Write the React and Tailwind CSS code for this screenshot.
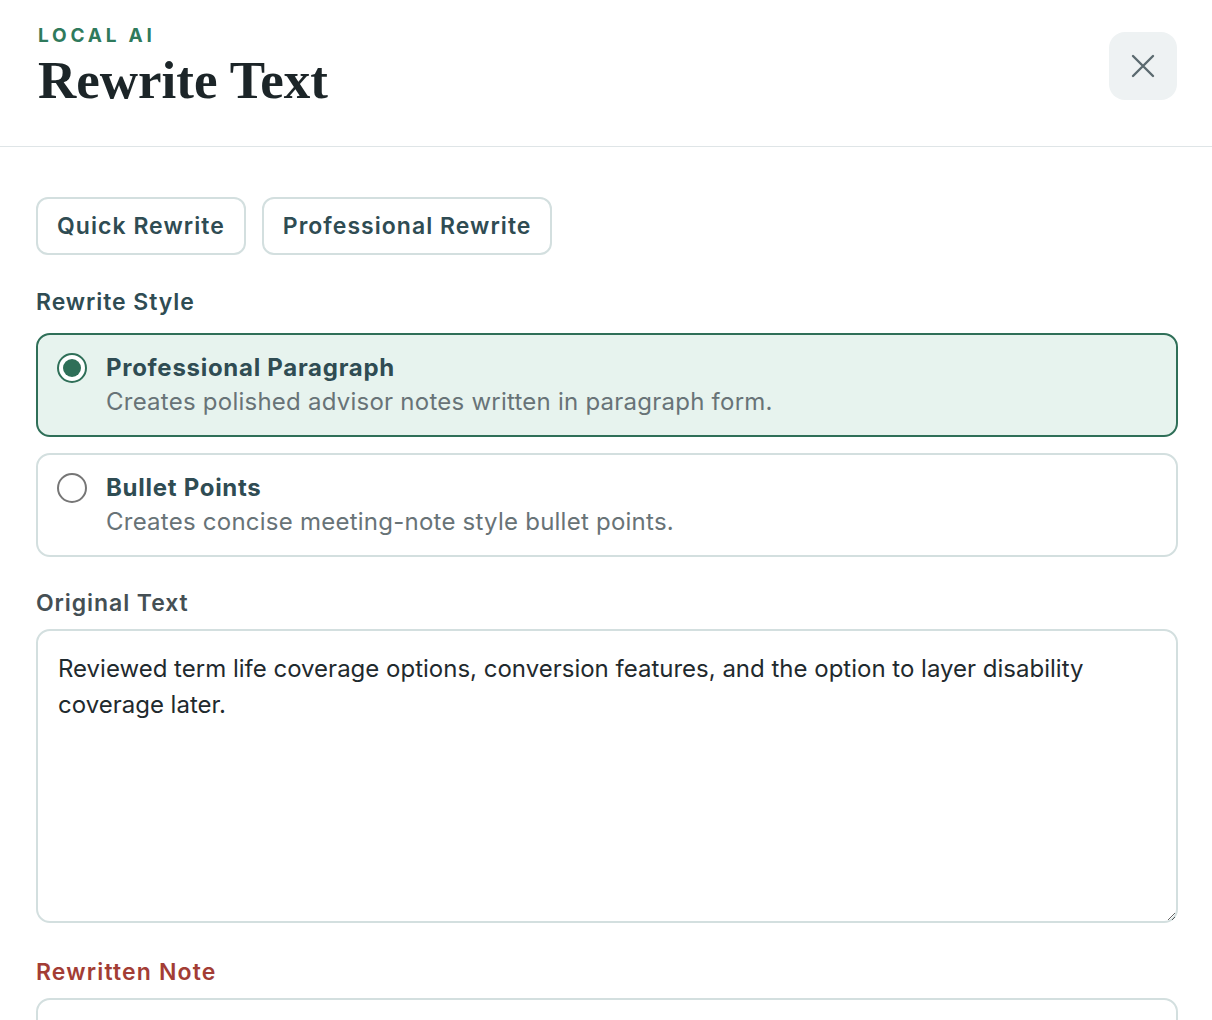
import React, { useState } from "react";

const styles = [
    {
        id: "paragraph",
        title: "Professional Paragraph",
        description: "Creates polished advisor notes written in paragraph form.",
    },
    {
        id: "bullets",
        title: "Bullet Points",
        description: "Creates concise meeting-note style bullet points.",
    },
];

function Radio({ checked }) {
    return (
        <span
            className={
                "mt-[2px] flex h-[30px] w-[30px] shrink-0 items-center justify-center rounded-full border-2 bg-white " +
                (checked ? "border-[#2f6f58]" : "border-[#767676]")
            }
        >
            {checked && <span className="h-[18px] w-[18px] rounded-full bg-[#2f6f58]" />}
        </span>
    );
}

export default function App() {
    const [style, setStyle] = useState("paragraph");
    const [text, setText] = useState(
        "Reviewed term life coverage options, conversion features, and the option to layer disability coverage later."
    );

    return (
        <div className="min-h-screen bg-white font-['Inter','Liberation_Sans',sans-serif] text-[#2f4c53]">
            {/* header */}
            <div className="flex items-start justify-between border-b border-[#dfe5e7] pb-[38px] pl-[38px] pr-[35px] pt-[24px]">
                <div>
                    <div className="text-[19px] font-bold uppercase leading-[24px] tracking-[0.2em] text-[#2f7a5c]">
                        Local AI
                    </div>
                    <h1 className="mt-[4px] font-['Liberation_Serif','Times_New_Roman',serif] text-[53px] font-bold leading-[56px] text-[#1c2528]">
                        Rewrite Text
                    </h1>
                </div>
                <button className="mt-[8px] flex h-[68px] w-[68px] items-center justify-center rounded-[16px] bg-[#eef2f3] text-[#5b6a6f]">
                    <svg width="24" height="24" viewBox="0 0 24 24" fill="none" stroke="currentColor" strokeWidth="2.4" strokeLinecap="round">
                        <path d="M2 2L22 22M22 2L2 22" />
                    </svg>
                </button>
            </div>

            {/* body */}
            <div className="pl-[36px] pr-[34px] pt-[50px]">
                <div className="flex gap-[16px]">
                    <button className="h-[58px] rounded-[12px] border-2 border-[#d3dfdf] px-[19px] text-[23px] font-semibold tracking-[0.045em]">
                        Quick Rewrite
                    </button>
                    <button className="h-[58px] rounded-[12px] border-2 border-[#d3dfdf] px-[19px] text-[23px] font-semibold tracking-[0.045em]">
                        Professional Rewrite
                    </button>
                </div>

                <div className="mt-[32px] text-[23px] font-semibold leading-[30px] tracking-[0.04em]">Rewrite Style</div>
                <div className="mt-[16px] flex flex-col gap-[16px]">
                    {styles.map(s => {
                        const checked = style === s.id;
                        return (
                            <div
                                key={s.id}
                                onClick={() => setStyle(s.id)}
                                className={
                                    "flex cursor-pointer items-start gap-[19px] rounded-[14px] border-2 py-[16px] pl-[19px] pr-[20px] " +
                                    (checked ? "border-[#2f6f58] bg-[#e7f3ee]" : "border-[#d3dfdf] bg-white")
                                }
                            >
                                <Radio checked={checked} />
                                <div>
                                    <div className="text-[24px] font-bold leading-[34px] tracking-[0.03em]">{s.title}</div>
                                    <div className="text-[24px] leading-[34px] tracking-[0.01em] text-[#687377]">{s.description}</div>
                                </div>
                            </div>
                        );
                    })}
                </div>

                <div className="mt-[31px] text-[23px] font-semibold leading-[30px] tracking-[0.04em] text-[#454f54]">Original Text</div>
                <textarea
                    value={text}
                    onChange={e => setText(e.target.value)}
                    className="mt-[11px] block h-[294px] w-full resize-y rounded-[14px] border-2 border-[#d3dfdf] p-[20px] text-[24px] leading-[36px] text-[#1f2a2e] outline-none"
                />

                <div className="mt-[34px] text-[23px] font-semibold leading-[30px] tracking-[0.05em] text-[#a33d35]">Rewritten Note</div>
                <div className="mt-[11px] h-[200px] rounded-[14px] border-2 border-[#d3dfdf]" />
            </div>
        </div>
    );
}
